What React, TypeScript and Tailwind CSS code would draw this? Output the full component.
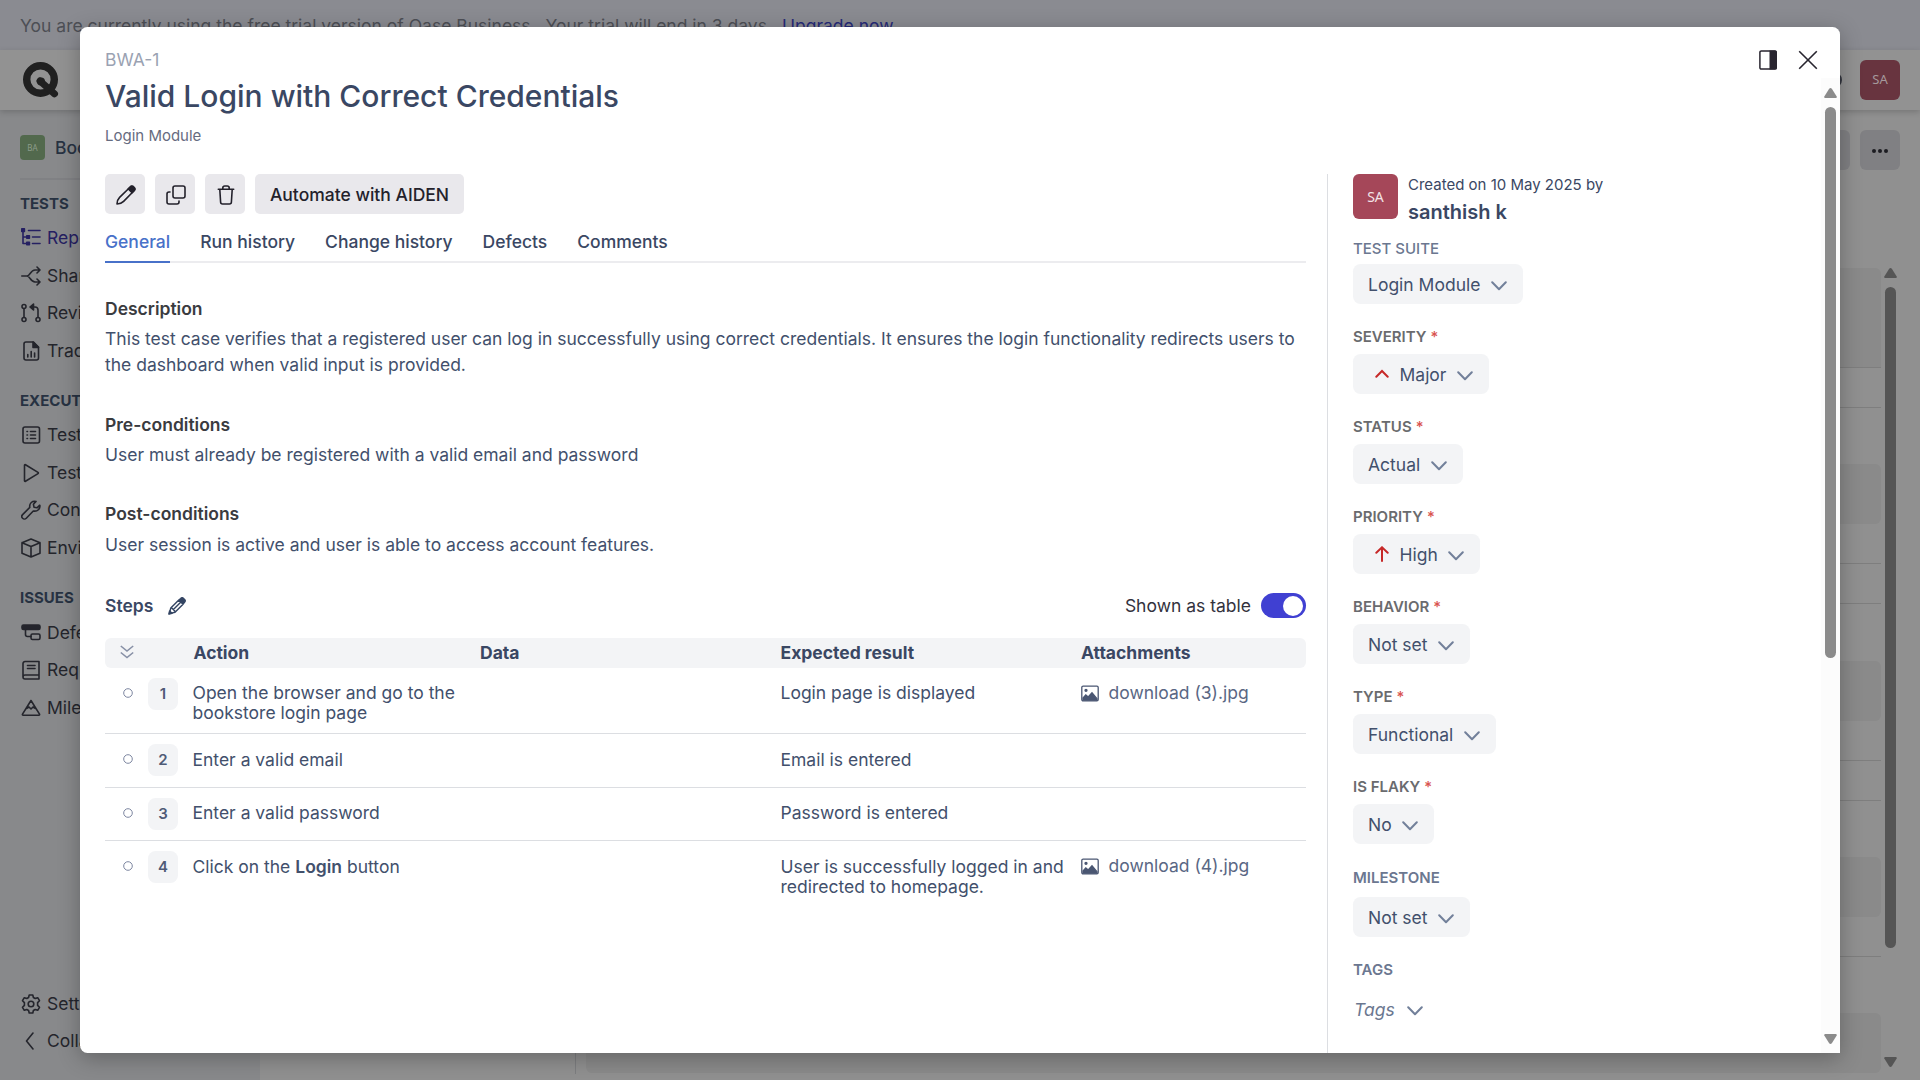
import React from "react";

type P = { children?: React.ReactNode; className?: string };

function Ico({ children, className = "size-5" }: P) {
  return (
    <svg viewBox="0 0 20 20" fill="none" stroke="currentColor" strokeWidth={1.6} strokeLinecap="round" strokeLinejoin="round" className={"shrink-0 " + className}>
      {children}
    </svg>
  );
}

const icons = {
  repo: (
    <Ico>
      <path d="M2 1.500v14h5M2 9h5M7.500 2.500h11.500M11.500 9H19M11.500 15.500H19" />
      <path d="M.8.8h2.600v2.600H.8zM5.800 7.700h2.600v2.600H5.800zM5.800 14.200h2.600v2.600H5.800z" fill="currentColor" />
    </Ico>
  ),
  share: (
    <Ico>
      <path d="M.8 10H6c3 0 3.500-6 8-6h5M6 10c3 0 3.500 6 8 6h5M16 1l3 3-3 3M16 13l3 3-3 3" />
    </Ico>
  ),
  review: (
    <Ico>
      <circle cx="3" cy="3.500" r="2" />
      <circle cx="3" cy="16.500" r="2" />
      <circle cx="17" cy="16.500" r="2" />
      <path d="M3 5.500v9M17 14.500V7a3 3 0 0 0-3-3h-3" />
      <path d="M12.500 1v6L9 4z" fill="currentColor" />
    </Ico>
  ),
  trace: (
    <Ico>
      <path d="M12.500 1H5a2 2 0 0 0-2 2v14a2 2 0 0 0 2 2h10.500a2 2 0 0 0 2-2V6z" />
      <path d="M12 1v5.500h5.500z" fill="currentColor" />
      <path d="M6.800 13.500V16M10.200 10.500V16M13.600 12V16" />
    </Ico>
  ),
  list: (
    <Ico>
      <rect x="2" y="2" width="16.500" height="16" rx="2" />
      <path d="M9.500 6.500h5M9.500 10h5M9.500 13.500h5M6 6.500h.5M6 10h.5M6 13.500h.5" />
    </Ico>
  ),
  play: (
    <Ico>
      <path d="M3.500 2.200v15.600c0 .6.500.8 1 .5L17 10.600c.5-.3.500-.9 0-1.200L4.500 1.700c-.5-.3-1-.1-1 .5z" />
    </Ico>
  ),
  wrench: (
    <Ico>
      <path d="M18.800 5.200l-2.800 2.600-3-.6-.6-3 2.600-2.800c-3.500-.9-7 1.800-6.200 6L1.600 14.600a2.500 2.500 0 0 0 3.700 3.700l7-7.300c4.200.9 7.200-2.300 6.500-5.800z" />
    </Ico>
  ),
  box: (
    <Ico>
      <path d="M10 1l9 3.700v10.600L10 19l-9-3.700V4.700zM1 4.700l9 3.800 9-3.800M10 8.500V19" />
    </Ico>
  ),
  defects: (
    <Ico>
      <rect x="1" y="2" width="18" height="4.500" rx="1.500" fill="currentColor" />
      <path d="M4.500 7v4.500a2 2 0 0 0 2 2H10" />
      <rect x="10" y="11" width="9" height="5.500" rx="1.500" />
    </Ico>
  ),
  book: (
    <Ico>
      <path d="M18 15H4a2 2 0 0 0 0 4h14V1.500H4a2 2 0 0 0-2 2V17M6.500 5.500h7.500M6.500 8.500h7.500" />
    </Ico>
  ),
  mile: (
    <Ico>
      <path d="M10 2.500L1.500 16.200c-.3.600 0 1.100.6 1.100h15.800c.6 0 .9-.5.6-1.100zM5.500 10.500l2.500-1.500 2 2 2-2 2.500 1.500" />
    </Ico>
  ),
  gear: (
    <Ico>
      <circle cx="10" cy="10" r="2.800" />
      <path d="M8.200 1h3.600l.6 2.500 1.800 1 2.500-.8 1.800 3-1.900 1.900v2.800l1.900 1.900-1.800 3-2.500-.8-1.800 1-.6 2.500H8.200l-.6-2.500-1.800-1-2.500.8-1.800-3 1.900-1.900V8.600L1.500 6.700l1.800-3 2.500.8 1.800-1z" />
    </Ico>
  ),
  back: (
    <Ico>
      <path d="M12 2L5.500 10l6.500 8" />
    </Ico>
  ),
};

function Heading({ children, className = "" }: P) {
  return <div className={"flex h-5 items-center pl-5 text-[15px] font-bold text-[#273242] " + className}>{children}</div>;
}

function Nav({ icon, label, active }: { icon: React.ReactNode; label: string; active?: boolean }) {
  return (
    <div className={"flex h-[37.500px] items-center gap-[6px] pl-[21px] " + (active ? "text-[#252062]" : "text-[#24252c]")}>
      {icon}
      <span>{label}</span>
    </div>
  );
}

function Scrollbar({ dark, className = "" }: { dark?: boolean; className?: string }) {
  return (
    <div className={"flex w-[19px] flex-col items-center " + (dark ? "pt-[11px] pb-[13px] text-[#555]" : "bg-[#fcfcfc] pt-[10px] pb-[9px] text-[#8b8b8b]")}>
      <svg viewBox="0 0 13 10" className="h-[10px] w-[13px] shrink-0 fill-current"><path d="M6.500 0q.8 0 1.500 1l4.700 7.500Q13 10 12 10H1Q0 10 .3 8.500L5 1q.7-1 1.500-1z" /></svg>
      <div className={"mt-[9px] w-[11px] shrink-0 rounded-full bg-current " + className} />
      <div className="grow" />
      <svg viewBox="0 0 13 10" className="h-[10px] w-[13px] shrink-0 fill-current"><path d="M6.500 10q.8 0 1.500-1l4.700-7.500Q13 0 12 0H1Q0 0 .3 1.500L5 9q.7 1 1.500 1z" /></svg>
    </div>
  );
}

function Backdrop() {
  return (
    <div className="flex h-full flex-col bg-[#909090]">
      <div className="flex h-[50px] shrink-0 items-center bg-[#8a8b91] pt-[2px] pl-5 text-[#4d4f55]">
        <span>You are currently using the free trial version of Qase Business . Your trial will end in 3 days.</span>
        <span className="ml-[10px] text-[#262a78]">Upgrade now</span>
      </div>
      <div className="relative z-10 flex h-[60px] shrink-0 items-center justify-between bg-[#929292] pr-5 pl-[23px] shadow-[0_2px_6px_rgba(0,0,0,0.18)]">
        <svg viewBox="0 0 36 36" className="size-[36px]" fill="none">
          <circle cx="17.500" cy="17.500" r="13.800" stroke="#202020" strokeWidth="7.400" />
          <path d="M17 19l14.500 12.800" stroke="#202020" strokeWidth="7" strokeLinecap="round" />
          <circle cx="18" cy="19.500" r="4" fill="#202020" />
        </svg>
        <div className="flex items-center gap-[18px]">
          <div className="size-4 rounded-full border-2 border-[#33363f]" />
          <div className="flex size-10 items-center justify-center rounded-[6px] bg-[#68343f] font-['Noto_Sans'] text-[13px] text-[#a5999c]">SA</div>
        </div>
      </div>
      <div className="flex min-h-0 grow">
        <div className="flex w-[260px] shrink-0 flex-col bg-[#88898b]">
          <div className="ml-5 flex h-[70px] items-center gap-[10px] border-b-2 border-[#808184] pt-[7px]">
            <div className="flex size-[25px] items-center justify-center rounded-[4px] bg-[#52694d] font-['Noto_Sans'] text-[8px] text-[#8c9c8b]">BA</div>
            <span className="pt-px font-medium text-[#273242]">Bookstore</span>
          </div>
          <Heading className="mt-[14px]">TESTS</Heading>
          <div className="mt-[5.500px]">
            <Nav icon={icons.repo} label="Repository" active />
            <Nav icon={icons.share} label="Shared Steps" />
            <Nav icon={icons.review} label="Review" />
            <Nav icon={icons.trace} label="Traceability" />
          </div>
          <Heading className="mt-[21.500px]">EXECUTION</Heading>
          <div className="mt-[5.500px]">
            <Nav icon={icons.list} label="Test Plans" />
            <Nav icon={icons.play} label="Test Runs" />
            <Nav icon={icons.wrench} label="Configurations" />
            <Nav icon={icons.box} label="Environments" />
          </div>
          <Heading className="mt-[21.500px]">ISSUES</Heading>
          <div className="mt-[6px]">
            <Nav icon={icons.defects} label="Defects" />
            <Nav icon={icons.book} label="Requirements" />
            <Nav icon={icons.mile} label="Milestones" />
          </div>
          <div className="mt-auto mb-[20px]">
            <Nav icon={icons.gear} label="Settings" />
            <Nav icon={icons.back} label="Collapse" />
          </div>
        </div>
        <div className="flex min-w-0 grow flex-col">
          <div className="flex h-[147px] shrink-0 justify-end gap-[10px] pt-5 pr-5">
            <div className="h-10 w-[60px] rounded-[6px] bg-[#808083]" />
            <div className="flex size-10 items-center justify-center gap-[2px] rounded-[6px] bg-[#808083] pt-px">
              <i className="size-1 rounded-full bg-[#1c1c22]" />
              <i className="size-1 rounded-full bg-[#1c1c22]" />
              <i className="size-1 rounded-full bg-[#1c1c22]" />
            </div>
          </div>
          <div className="flex min-h-0 grow pr-5">
            <div className="mb-[6px] w-[316px] shrink-0 border-r border-[#7d7e80]" />
            <div className="flex min-w-0 grow flex-col pt-[11px] pl-[10px]">
              <div className="h-[100px] shrink-0 rounded-t-[6px] border-b border-[#7e7e7e] bg-[#8a8a8a]" />
              <div className="h-[40px] shrink-0 border-b border-[#7e7e7e]" />
              <div className="h-[56px] shrink-0" />
              <div className="h-[60px] shrink-0 rounded-[6px] bg-[#8a8a8a]" />
              <div className="h-[40px] shrink-0 border-b border-[#7e7e7e]" />
              <div className="h-[40px] shrink-0 border-b border-[#7e7e7e]" />
              <div className="h-[57px] shrink-0" />
              <div className="h-[60px] shrink-0 rounded-[6px] bg-[#8a8a8a]" />
              <div className="h-[40px] shrink-0 border-b border-[#7e7e7e]" />
              <div className="h-[40px] shrink-0 border-b border-[#7e7e7e]" />
              <div className="h-[56px] shrink-0" />
              <div className="h-[60px] shrink-0 rounded-[6px] bg-[#8a8a8a]" />
              <div className="h-[40px] shrink-0 border-b border-[#7e7e7e]" />
              <div className="h-[56px] shrink-0" />
              <div className="h-[60px] shrink-0 rounded-[6px] bg-[#8a8a8a]" />
            </div>
            <Scrollbar dark className="h-[661px]" />
          </div>
        </div>
      </div>
    </div>
  );
}

function Pencil({ className = "" }: P) {
  return (
    <Ico className={className}>
      <path d="M1 19c0-2.500.8-4.800 2.600-6.600L14 2.200a2.200 2.200 0 0 1 3.100 0l.7.700a2.200 2.200 0 0 1 0 3.100L7.600 16.400C5.800 18.200 3.500 19 1 19z" />
      <path d="M12.300 3.900l2.200-2.200a2.200 2.200 0 0 1 3 0l.8.800a2.200 2.200 0 0 1 0 3l-2.200 2.200z" fill="currentColor" />
    </Ico>
  );
}

function StepPencil() {
  return (
    <Ico className="ml-[15px] size-[18px] text-[#344563]">
      <path d="M1.500 18.500l1.600-6.300L12 3.300 16.700 8l-8.900 8.900zM6 14l7.500-7.500M4.500 12.500l3 3" />
      <path d="M12.800 2.800l1.300-1.200a2.300 2.300 0 0 1 3.200 0l1.100 1.100a2.300 2.300 0 0 1 0 3.200l-1.200 1.300z" fill="currentColor" />
      <path d="M1 19l.8-3.500 2.700 2.700z" fill="currentColor" />
    </Ico>
  );
}

function SquareButton({ children }: P) {
  return <div className="flex size-10 items-center justify-center rounded-[5px] bg-[#e9e8ec] pt-px pl-px text-[#23212b]">{children}</div>;
}

function Section({ title, children, className = "" }: P & { title: string }) {
  return (
    <div className={className}>
      <div className="flex h-[26px] items-center font-semibold text-[#3a3b3f]">{title}</div>
      <div className="mt-1 leading-[26.25px] text-[#42506c]">{children}</div>
    </div>
  );
}

function Step({ n, action, expected, file, className = "", textTop = "pt-[5px]" }: { n: number; action: React.ReactNode; expected: string; file?: string; className?: string; textTop?: string }) {
  return (
    <div className={"grid grid-cols-[43px_44.500px_287.500px_300.500px_300.500px_1fr] pt-[10px] leading-5 text-[#42506c] " + className}>
      <svg viewBox="0 0 10 10" className="mt-[9.500px] ml-[17.500px] size-[10px]" fill="none" stroke="#7d86a0">
        <circle cx="5" cy="5" r="4.300" />
      </svg>
      <div className="flex h-8 w-[30px] items-center justify-center rounded-[7.500px] bg-[#f3f4f6] text-[15px] font-semibold text-[#4f5b76]">{n}</div>
      <div className={textTop}>{action}</div>
      <div />
      <div className={textTop}>{expected}</div>
      {file && (
        <div className="mt-[5px] flex h-5 items-center text-[#5a6784]">
          <svg viewBox="0 0 18 16" className="mr-[9.500px] h-[17px] w-[18px]" fill="none" stroke="#4a5672" strokeWidth="1.300">
            <rect x=".8" y=".7" width="16.400" height="14.600" rx="1.300" />
            <circle cx="5" cy="4.800" r="1" fill="#4a5672" />
            <path d="M2 14.500v-2l2.800-3 2.400 2L11 7.200l5 6v1.500z" fill="#4a5672" />
          </svg>
          {file}
        </div>
      )}
    </div>
  );
}

function Chevron() {
  return (
    <svg viewBox="0 0 16 10" className="mt-px h-[10px] w-4 shrink-0" fill="none" stroke="#72809a" strokeWidth="2" strokeLinecap="round" strokeLinejoin="round">
      <path d="M1.200 1.200L8 8.300l6.800-7.100" />
    </svg>
  );
}

function Select({ children, className = "" }: P) {
  return (
    <div className={"flex h-10 items-center justify-between rounded-[7.500px] bg-[#f3f4f6] pt-[2px] pr-4 pl-[15px] text-[#42506c] " + className}>
      <span className="flex items-center">{children}</span>
      <Chevron />
    </div>
  );
}

function Field({ label, value, icon, className }: { label: string; value: string; icon?: React.ReactNode; className: string }) {
  return (
    <div className="mt-[21px]">
      <div className="flex h-6 items-center gap-[4px] text-[15px] font-semibold text-[#6a6b6e]">
        {label}
        <span className="font-medium text-[#d9534f]">*</span>
      </div>
      <Select className={"mt-[5px] " + className}>
        {icon}
        {value}
      </Select>
    </div>
  );
}

export default function App() {
  return (
    <div className="relative h-[1080px] w-[1920px] overflow-hidden font-['Inter',sans-serif] text-[17.500px]">
      <Backdrop />
      <div className="absolute top-[27px] left-[80px] z-20 flex h-[1026px] w-[1760px] flex-col overflow-hidden rounded-[7.500px] rounded-br-none bg-white shadow-[0_5px_22px_rgba(0,0,0,0.28)]">
        <div className="flex h-[51px] shrink-0 justify-between pr-[22px] pl-[25px]">
          <div className="mt-[21px] flex h-6 items-center text-[#9aa2b2]">BWA-1</div>
          <div className="mt-[23px] flex gap-[22px] text-[#28252f]">
            <svg viewBox="0 0 18 20" className="h-5 w-[18px]">
              <rect x=".9" y=".9" width="16.200" height="18.200" rx="1.400" fill="none" stroke="currentColor" strokeWidth="1.500" />
              <path d="M10.500 .5h6q1.500 0 1.500 1.500v16q0 1.500-1.500 1.500h-6z" fill="currentColor" />
            </svg>
            <svg viewBox="0 0 20 20" className="-ml-px size-5" stroke="currentColor" strokeWidth="1.600"><path d="M1.200 1.200l17.600 17.600M18.800 1.200L1.200 18.800" /></svg>
          </div>
        </div>
        <div className="flex min-h-0 grow">
          <div className="flex min-w-0 grow flex-col pl-[25px]">
            <div className="flex h-9 shrink-0 items-center text-[30px] font-medium text-[#3a4763]">Valid Login with Correct Credentials</div>
            <div className="mt-[12px] flex h-5 shrink-0 items-center text-[15px] text-[#666b80]">Login Module</div>
            <div className="mt-[28px] flex min-h-0 grow">
              <div className="w-[1201px] shrink-0">
                <div className="flex gap-[10px]">
                  <SquareButton><Pencil className="size-5" /></SquareButton>
                  <SquareButton>
                    <Ico>
                      <rect x="7" y="1" width="12" height="12" rx="2" />
                      <path d="M4 7H3a2 2 0 0 0-2 2v8a2 2 0 0 0 2 2h8a2 2 0 0 0 2-2v-1" />
                    </Ico>
                  </SquareButton>
                  <SquareButton>
                    <Ico>
                      <path d="M2.300 4.300h15.400M3.800 4.500l.8 12.500a2 2 0 0 0 2 2h6.800a2 2 0 0 0 2-2l.8-12.500M6.800 4v-1a2 2 0 0 1 2-2h2.400a2 2 0 0 1 2 2v1" />
                    </Ico>
                  </SquareButton>
                  <div className="flex h-10 w-[209px] items-center justify-center rounded-[5px] bg-[#e9e8ec] pt-[2px] font-medium text-[#23212b]">Automate with AIDEN</div>
                </div>
                <div className="mt-[9px] flex h-10 gap-[30px] border-b-2 border-[#ececef] font-medium text-[#3a4763]">
                  {["General", "Run history", "Change history", "Defects", "Comments"].map((t, i) => (
                    <div key={t} className={"flex h-10 items-center " + (i === 0 ? "border-b-2 border-[#4871c9] text-[#4871c9]" : "pb-[2px]")}>{t}</div>
                  ))}
                </div>
                <Section title="Description" className="mt-[33px]">
                  This test case verifies that a registered user can log in successfully using correct credentials. It ensures the login functionality redirects users to the dashboard when valid input is provided.
                </Section>
                <Section title="Pre-conditions" className="mt-[33.500px]">User must already be registered with a valid email and password</Section>
                <div className="mt-[33px] flex h-[26px] items-center font-semibold text-[#3a3b3f]">Post-conditions</div>
                <div className="mt-[4.500px] leading-[26.25px] text-[#42506c]">User session is active and user is able to access account features.</div>
                <div className="mt-[35px] flex h-[26px] items-center">
                  <span className="font-semibold text-[#3a4763]">Steps</span>
                  <StepPencil />
                  <span className="ml-auto text-[#33323d]">Shown as table</span>
                  <div className="-mt-px ml-[10px] flex h-[25px] w-[45px] items-center justify-end rounded-full bg-[#4040d2] pr-[3px]">
                    <div className="size-5 rounded-full bg-white" />
                  </div>
                </div>
                <div className="mt-[19px] grid h-[30px] grid-cols-[88.500px_286.500px_300.500px_300.500px_1fr] items-center rounded-[6px] bg-[#f3f4f6] font-bold text-[#3a4763]">
                  <svg viewBox="0 0 14 14" className="-mt-[2px] ml-[15px] h-[14px] w-[14px]" fill="none" stroke="#8790a6" strokeWidth="1.600"><path d="M.8 1l6.200 5 6.200-5M.8 7.500l6.200 5 6.200-5" /></svg>
                  <span>Action</span>
                  <span>Data</span>
                  <span>Expected result</span>
                  <span>Attachments</span>
                </div>
                <Step n={1} action={<>Open the browser and go to the<br />bookstore login page</>} expected="Login page is displayed" file="download (3).jpg" className="h-[66px] border-b border-[#dcdee2]" />
                <Step n={2} action="Enter a valid email" expected="Email is entered" textTop="pt-[6px]" className="h-[54px] border-b border-[#dcdee2]" />
                <Step n={3} action="Enter a valid password" expected="Password is entered" className="h-[53px] border-b border-[#dcdee2]" />
                <Step n={4} action={<>Click on the <b className="font-semibold">Login</b> button</>} expected="User is successfully logged in and redirected to homepage." file="download (4).jpg" textTop="pt-[6px]" className="h-[66px]" />
              </div>
              <div className="ml-[21px] grow border-l border-[#dcdee2] pl-[25px]">
                <div className="flex gap-[10px]">
                  <div className="flex size-[45px] items-center justify-center rounded-[6px] bg-[#a54759] font-['Noto_Sans'] text-[14px] text-[#f3e4e7]">SA</div>
                  <div className="text-[#3a4763]">
                    <div className="flex h-[22px] items-center text-[15px]">Created on 10 May 2025 by</div>
                    <div className="mt-[3px] flex h-[26px] items-center text-[20px] font-semibold">santhish k</div>
                  </div>
                </div>
                <div className="mt-3 flex h-6 items-center text-[15px] font-medium text-[#6b7790]">TEST SUITE</div>
                <Select className="mt-[3px] w-[170px]">Login Module</Select>
                <Field label="SEVERITY" value="Major" className="w-[136px]" icon={<svg viewBox="0 0 14 9" className="-mt-[3px] mr-[11px] ml-[6.500px] h-[9px] w-[14px]" fill="none" stroke="#c62828" strokeWidth="2" strokeLinecap="round"><path d="M1.300 7.700L7 2l5.700 5.700" /></svg>} />
                <Field label="STATUS" value="Actual" className="w-[110px]" />
                <Field label="PRIORITY" value="High" className="w-[127px]" icon={<svg viewBox="0 0 14 16" className="-mt-[2px] mr-[11px] ml-[6.500px] h-4 w-[14px]" fill="none" stroke="#c62828" strokeWidth="2" strokeLinecap="round"><path d="M1.300 6.700L7 1.300l5.700 5.400M7 1.500V15" /></svg>} />
                <Field label="BEHAVIOR" value="Not set" className="w-[117px]" />
                <Field label="TYPE" value="Functional" className="w-[143px]" />
                <Field label="IS FLAKY" value="No" className="w-[81px]" />
                <div className="mt-[22px] flex h-6 items-center text-[15px] font-semibold text-[#6b7790]">MILESTONE</div>
                <Select className="mt-[7px] w-[117px]">Not set</Select>
                <div className="mt-[21px] flex h-6 items-center text-[15px] font-semibold text-[#6b7790]">TAGS</div>
                <div className="mt-[8px] flex h-10 items-center gap-3 pl-px text-[#6b7790] italic">
                  Tags
                  <Chevron />
                </div>
              </div>
            </div>
          </div>
          <Scrollbar className="h-[551px]" />
        </div>
      </div>
    </div>
  );
}
